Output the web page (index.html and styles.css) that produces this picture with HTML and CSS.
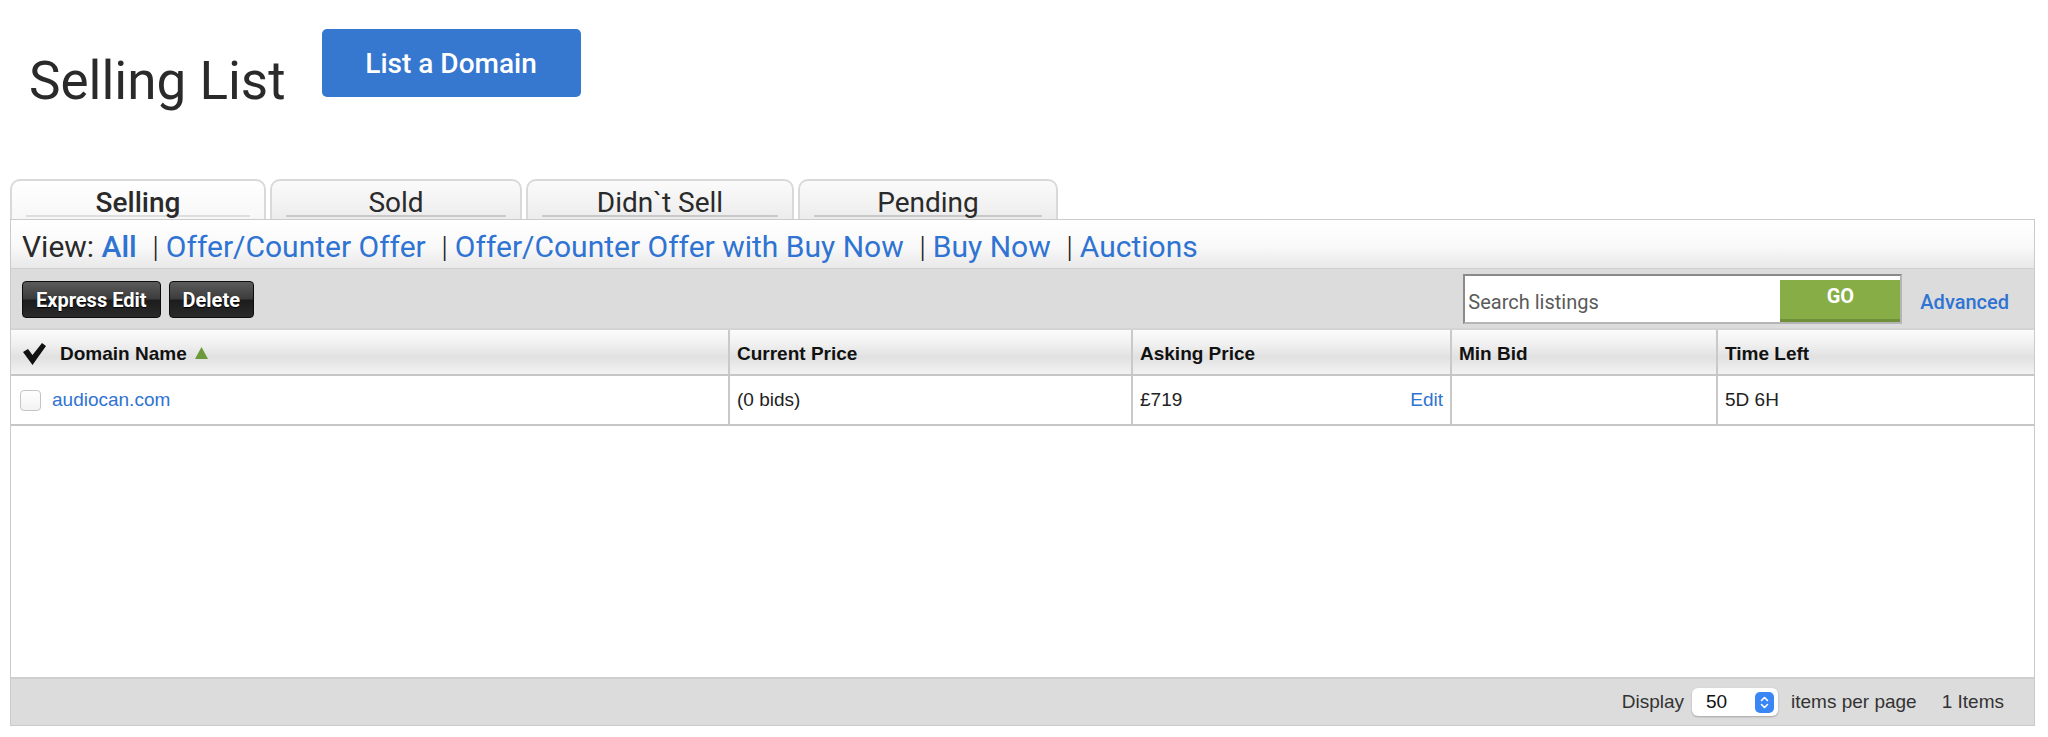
FILE: index.html
```html
<!DOCTYPE html>
<html lang="en">
<head>
  <meta charset="UTF-8" />
  <title>Selling List</title>
  <link rel="stylesheet" href="styles.css">
</head>
<body>
  <div class="page-head">
    <h1>Selling List</h1>
    <button class="list-btn">List a Domain</button>
  </div>

  <div class="tabs">
    <div class="tab active"><span class="tab-label">Selling</span></div>
    <div class="tab tab-sold"><span class="tab-label">Sold</span></div>
    <div class="tab tab-didnt"><span class="tab-label">Didn`t Sell</span></div>
    <div class="tab tab-pending"><span class="tab-label">Pending</span></div>
  </div>

  <div class="panel">
    <div class="view-row">
      <span class="view-label">View:</span>
      <a class="view-link current" href="#">All</a>
      <span class="sep">|</span><a class="view-link" href="#">Offer/Counter Offer</a>
      <span class="sep">|</span><a class="view-link" href="#">Offer/Counter Offer with Buy Now</a>
      <span class="sep">|</span><a class="view-link" href="#">Buy Now</a>
      <span class="sep">|</span><a class="view-link" href="#">Auctions</a>
    </div>

    <div class="toolbar">
      <div class="actions">
        <button class="dark-btn">Express Edit</button>
        <button class="dark-btn">Delete</button>
      </div>
      <div class="search">
        <div class="search-box">
          <input type="text" placeholder="Search listings">
          <button class="go-btn">GO</button>
        </div>
        <a class="advanced" href="#">Advanced</a>
      </div>
    </div>

    <table class="listings">
      <thead>
        <tr>
          <th class="col-domain">
            <span class="head-domain">
              <svg class="check-all" width="23" height="22" viewBox="0 0 23 22"><polygon points="0,9 5,6 9.5,12 19,0 23,3 9.5,22" fill="#111"/></svg>
              Domain Name
              <svg class="sort-up" width="13" height="12" viewBox="0 0 13 12"><polygon points="6.5,0 13,12 0,12" fill="#6c9a3b"/></svg>
            </span>
          </th>
          <th class="col-current">Current Price</th>
          <th class="col-asking">Asking Price</th>
          <th class="col-min">Min Bid</th>
          <th class="col-time">Time Left</th>
        </tr>
      </thead>
      <tbody>
        <tr>
          <td>
            <span class="domain-cell">
              <span class="checkbox"></span>
              <a href="#">audiocan.com</a>
            </span>
          </td>
          <td class="bids">(0 bids)</td>
          <td>
            <span class="asking-cell">£719 <a href="#">Edit</a></span>
          </td>
          <td></td>
          <td>5D 6H</td>
        </tr>
      </tbody>
    </table>

    <div class="empty-area"></div>

    <div class="pager">
      <span>Display</span>
      <div class="per-page">
        <span>50</span>
        <svg width="19" height="21" viewBox="0 0 19 21">
          <rect width="19" height="21" rx="5" fill="#3b86f5"/>
          <path d="M6.5 8.5 L9.5 5.5 L12.5 8.5 M6.5 12.5 L9.5 15.5 L12.5 12.5" stroke="#fff" stroke-width="1.6" fill="none" stroke-linecap="round" stroke-linejoin="round"/>
        </svg>
      </div>
      <span class="per-page-label">items per page</span>
      <span>1 Items</span>
    </div>
  </div>
</body>
</html>
```

FILE: styles.css
```css
body {
  margin: 0;
  background: #fff;
  font-family: Roboto, "Liberation Sans", sans-serif;
  color: #2b2b2b;
}

a {
  color: #2f73d3;
  text-decoration: none;
}

.page-head {
  display: flex;
  align-items: flex-start;
  gap: 36px;
  height: 179px;
  box-sizing: border-box;
  padding: 29px 0 0 29px;
}

h1 {
  margin: 20px 0 0;
  font-size: 53px;
  line-height: 64px;
  font-weight: 400;
  color: #2a2a2a;
}

.list-btn {
  width: 259px;
  height: 68px;
  border: none;
  border-radius: 5px;
  background: #3677cf;
  color: #fff;
  font-family: Roboto, sans-serif;
  font-size: 28px;
  font-weight: 500;
  cursor: pointer;
}

/* tabs */
.tabs {
  display: flex;
  gap: 4px;
  padding-left: 10px;
  height: 40px;
}

.tab {
  box-sizing: border-box;
  width: 256px;
  height: 40px;
  padding: 0 14px;
  border: 2px solid #d9d9d9;
  border-bottom: none;
  border-radius: 10px 10px 0 0;
  background: linear-gradient(#fbfbfb, #ececec);
  text-align: center;
  font-size: 28px;
  color: #2a2a2a;
}

.tab.active {
  background: linear-gradient(#ffffff, #f7f7f7);
  font-weight: 500;
}

.tab-sold { width: 252px; }
.tab-didnt { width: 268px; }
.tab-pending { width: 260px; }

.tab-label {
  display: block;
  height: 36px;
  box-sizing: border-box;
  padding-top: 5px;
  line-height: 34px;
  border-bottom: 2px solid #c9c9c9;
}

.tab.active .tab-label {
  border-bottom-color: #dedede;
}

/* panel */
.panel {
  margin: 0 13px 0 10px;
  border: 1px solid #cbcbcb;
}

.view-row {
  height: 48px;
  box-sizing: border-box;
  padding: 7px 0 0 11px;
  background: linear-gradient(#ffffff 0%, #f9f9f9 55%, #e8e8e8 100%);
  font-size: 30px;
  line-height: 40px;
  white-space: nowrap;
}

.view-label {
  color: #2a2a2a;
}

.view-link.current {
  font-weight: 500;
}

.sep {
  margin: 0 7px 0 8px;
  color: #222;
  font-weight: 300;
}

.toolbar {
  display: flex;
  justify-content: space-between;
  align-items: center;
  height: 60px;
  box-sizing: border-box;
  padding: 0 25px 0 11px;
  background: #dcdcdc;
  border-top: 1px solid #d0d0d0;
}

.actions {
  display: flex;
  gap: 8px;
  padding-top: 2px;
}

.dark-btn {
  height: 37px;
  padding: 0 13px;
  border: 1px solid #0d0d0d;
  border-radius: 4px;
  background: linear-gradient(#5b5b5b 0%, #3c3c3c 48%, #1c1c1c 52%, #2a2a2a 100%);
  color: #fff;
  font-family: Roboto, sans-serif;
  font-size: 20px;
  font-weight: 700;
  text-shadow: 0 1px 1px #000;
  cursor: pointer;
}

.search {
  display: flex;
  align-items: center;
  gap: 18px;
}

.search-box {
  display: flex;
  align-items: center;
  width: 439px;
  height: 50px;
  box-sizing: border-box;
  border: 2px solid #8a8a8a;
  border-right-color: #b5b5b5;
  border-bottom-color: #b5b5b5;
  background: #fff;
}

.search-box input {
  flex: 1;
  min-width: 0;
  height: 100%;
  border: none;
  outline: none;
  padding: 6px 0 0 3px;
  box-sizing: border-box;
  font-family: Roboto, sans-serif;
  font-size: 20px;
  color: #555;
}

.search-box input::placeholder {
  color: #5a5a5a;
}

.go-btn {
  width: 120px;
  height: 42px;
  margin-top: 4px;
  align-self: flex-start;
  border: none;
  border-bottom: 3px solid #6f8f3a;
  background: #87ad47;
  color: #fff;
  font-family: Roboto, sans-serif;
  font-size: 20px;
  font-weight: 700;
  padding-bottom: 8px;
  cursor: pointer;
}

.advanced {
  font-size: 20px;
  font-weight: 500;
  padding-top: 6px;
}

/* table */
.listings {
  width: 100%;
  border-collapse: collapse;
  table-layout: fixed;
  font-family: "Liberation Sans", Arial, sans-serif;
  font-size: 19px;
  color: #222;
}

.listings th {
  height: 46px;
  box-sizing: border-box;
  padding: 4px 7px 0;
  text-align: left;
  font-weight: 700;
  color: #111;
  background: linear-gradient(#fbfbfb 0%, #f1f1f1 30%, #e1e1e1 62%, #f3f3f3 100%);
  border-top: 2px solid #d4d4d4;
  border-bottom: 2px solid #c6c6c6;
  border-left: 2px solid #c9c9c9;
}

.listings th:first-child,
.listings td:first-child {
  border-left: none;
}

.col-domain { width: 718px; }
.col-current { width: 403px; }
.col-asking { width: 319px; }
.col-min { width: 266px; }

.head-domain {
  display: flex;
  align-items: center;
  gap: 14px;
  padding-left: 5px;
}

.sort-up {
  margin-left: -6px;
  margin-top: -3px;
}

.listings td {
  height: 50px;
  box-sizing: border-box;
  padding: 0 7px;
  border-left: 2px solid #c9c9c9;
  border-bottom: 2px solid #c6c6c6;
  vertical-align: middle;
}

.domain-cell {
  display: flex;
  align-items: center;
  gap: 11px;
  padding-left: 2px;
}

.checkbox {
  width: 19px;
  height: 19px;
  border: 1px solid #c4c4c4;
  border-radius: 4px;
  background: linear-gradient(#fff, #f3f3f3);
}

.bids {
  padding-left: 14px;
}

.asking-cell {
  display: flex;
  justify-content: space-between;
}

.empty-area {
  height: 251px;
  background: #fff;
}

.pager {
  display: flex;
  justify-content: flex-end;
  align-items: center;
  height: 46px;
  padding-right: 30px;
  border-top: 2px solid #cfcfcf;
  background: #dcdcdc;
  font-family: "Liberation Sans", Arial, sans-serif;
  font-size: 19px;
  color: #333;
}

.per-page {
  display: flex;
  align-items: center;
  justify-content: space-between;
  width: 86px;
  height: 28px;
  box-sizing: border-box;
  margin: 0 13px 0 8px;
  padding: 0 4px 0 14px;
  border-radius: 6px;
  background: #fff;
  box-shadow: 0 1px 2px rgba(0, 0, 0, 0.25);
  color: #111;
}

.per-page-label {
  margin-right: 25px;
}
```
